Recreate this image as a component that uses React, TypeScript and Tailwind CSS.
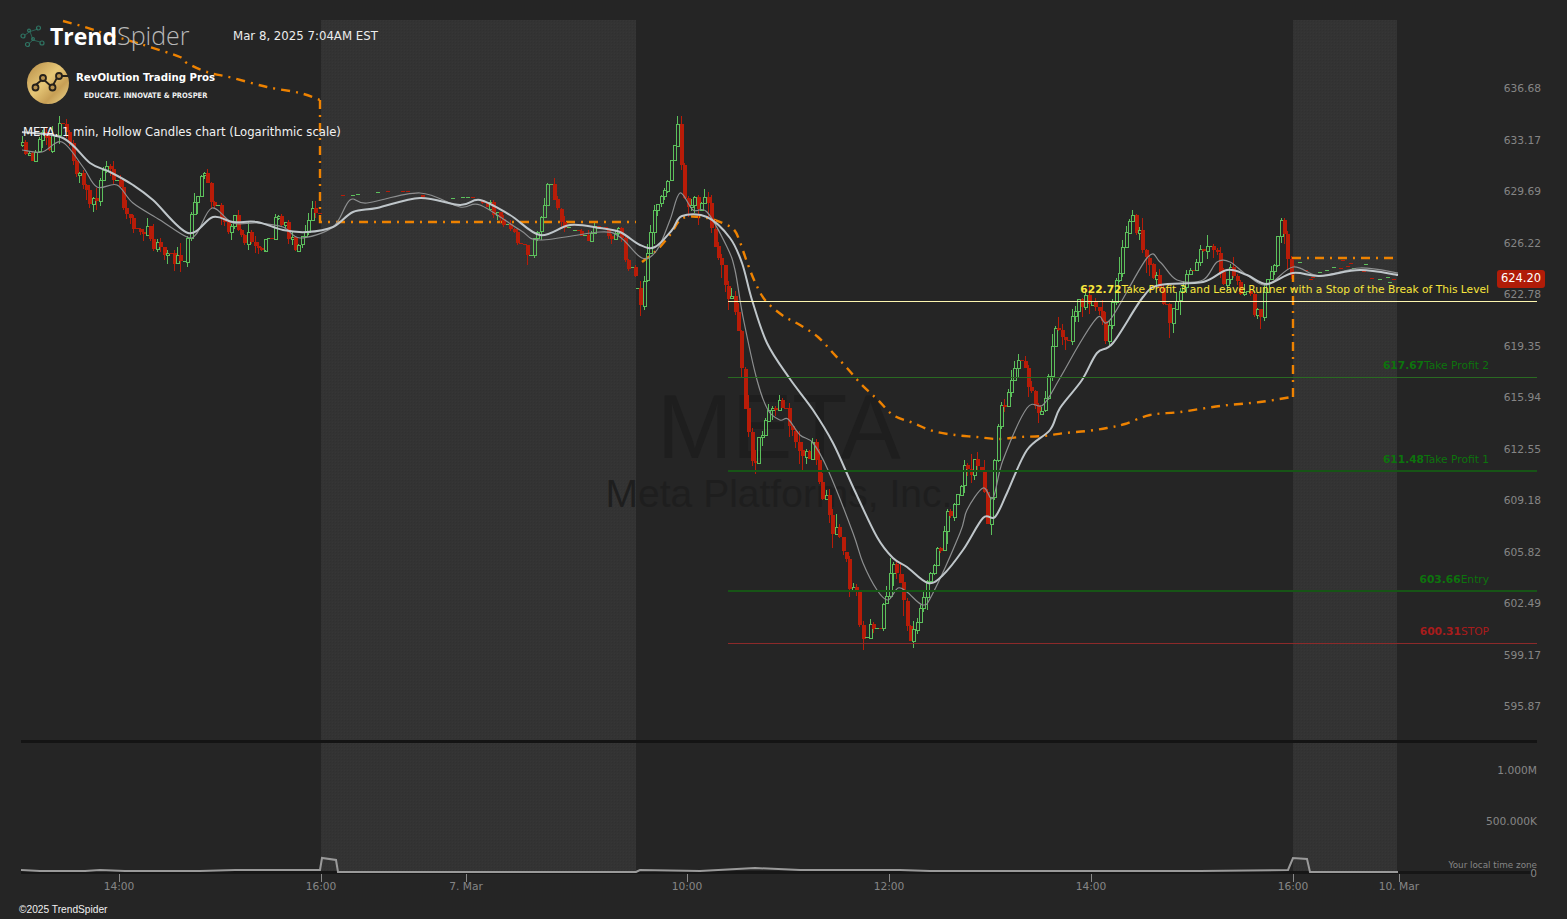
const W = 1567;
const H = 919;

type Pt = [number, number];

const PRICE_PATH: Pt[] = [
  [21, 145], [35, 150], [50, 142], [60, 135], [70, 165], [85, 200], [90, 222], [100, 188], [110, 176], [125, 208],
  [140, 222], [150, 238], [165, 262], [185, 268], [195, 190], [205, 170], [215, 212], [225, 236], [240, 225], [260, 242],
  [275, 222], [295, 255], [310, 225], [325, 215], [335, 195], [350, 195], [400, 190], [440, 200], [470, 195], [500, 215],
  [510, 240], [530, 262], [548, 182], [560, 222], [590, 225], [620, 240], [640, 298], [655, 205], [665, 180], [677, 128],
  [685, 195], [705, 205], [715, 250], [730, 290], [738, 350], [745, 410], [755, 465], [765, 420], [785, 415], [800, 455],
  [815, 450], [830, 510], [845, 565], [860, 625], [880, 628], [895, 565], [910, 628], [920, 615], [935, 550], [950, 510],
  [965, 455], [980, 470], [988, 540], [1000, 400], [1020, 370], [1040, 410], [1055, 340], [1075, 310], [1095, 300], [1105, 335],
  [1125, 228], [1140, 235], [1155, 265], [1170, 312], [1190, 265], [1210, 238], [1225, 270], [1245, 285], [1260, 325], [1280, 232],
  [1293, 265],
];

const MA_THICK: Pt[] = [
  [22, 132], [63, 138], [90, 163], [110, 172], [133, 185], [153, 200], [188, 233], [213, 217], [233, 222], [257, 222],
  [283, 230], [307, 232], [333, 227], [353, 212], [377, 208], [420, 198], [460, 205], [480, 200], [510, 215], [540, 235],
  [570, 225], [600, 228], [620, 232], [640, 245], [655, 247], [672, 230], [682, 216], [707, 217], [730, 238], [742, 263],
  [752, 300], [767, 343], [790, 379], [813, 410], [833, 443], [853, 487], [877, 537], [893, 558], [907, 567], [928, 583],
  [943, 575], [963, 550], [983, 518], [995, 517], [1007, 493], [1027, 450], [1050, 430], [1060, 408], [1082, 380], [1097, 353],
  [1113, 343], [1143, 297], [1160, 285], [1203, 282], [1227, 270], [1247, 275], [1267, 284], [1293, 273], [1320, 276], [1360, 270],
  [1398, 275],
];

const MA_THIN: Pt[] = [
  [22, 150], [42, 152], [62, 142], [83, 167], [97, 187], [117, 185], [133, 203], [160, 220], [187, 237], [197, 233],
  [212, 208], [233, 223], [257, 223], [283, 227], [300, 238], [333, 227], [350, 200], [367, 203], [420, 193], [460, 207],
  [480, 205], [520, 230], [540, 240], [600, 232], [620, 237], [642, 258], [657, 250], [670, 220], [680, 193], [693, 210],
  [707, 212], [727, 247], [735, 270], [743, 317], [757, 380], [768, 410], [780, 420], [788, 419], [800, 435], [813, 443],
  [828, 470], [853, 533], [863, 563], [877, 590], [888, 600], [898, 588], [907, 592], [923, 605], [933, 593], [960, 533],
  [967, 510], [983, 488], [993, 498], [1003, 460], [1027, 408], [1043, 405], [1060, 378], [1080, 343], [1098, 317], [1110, 320],
  [1147, 258], [1160, 262], [1177, 280], [1203, 280], [1217, 262], [1230, 262], [1247, 275], [1267, 285], [1293, 267], [1320, 276],
  [1360, 268], [1398, 273],
];

const VWAP_A: Pt[] = [
  [63, 21], [85, 27], [103, 33], [127, 40], [150, 47], [180, 57], [187, 63], [207, 72], [233, 78], [267, 87], [300, 93], [320, 100],
];
const VWAP_B: Pt[] = [
  [642, 262], [657, 250], [670, 235], [683, 218], [707, 218], [727, 225], [735, 231], [740, 242], [747, 262], [755, 282],
  [765, 300], [782, 315], [800, 325], [818, 337], [833, 353], [847, 368], [862, 385], [878, 400], [893, 415], [913, 423],
  [933, 431], [955, 435], [977, 437], [998, 439], [1020, 437], [1043, 436], [1065, 433], [1087, 431], [1107, 428], [1125, 424],
  [1150, 415], [1180, 412], [1220, 406], [1260, 402], [1292, 397],
];

const VOLUME: Pt[] = [
  [21, 870], [40, 871], [85, 871], [100, 870], [125, 871], [200, 871], [235, 870], [320, 870], [322, 858], [336, 860], [338, 872],
  [636, 872], [640, 870], [700, 871], [755, 868], [800, 870], [860, 870], [900, 870], [930, 871], [1000, 871], [1100, 871],
  [1200, 871], [1288, 870], [1293, 858], [1307, 859], [1310, 872], [1398, 872],
];

const PRICE_TICKS = [
  ["636.68", 89], ["633.17", 141], ["629.69", 192], ["626.22", 244], ["622.78", 295], ["619.35", 347], ["615.94", 398],
  ["612.55", 450], ["609.18", 501], ["605.82", 553], ["602.49", 604], ["599.17", 656], ["595.87", 707],
] as const;

const TIME_TICKS = [
  ["14:00", 119], ["16:00", 321], ["7. Mar", 466], ["10:00", 687], ["12:00", 889], ["14:00", 1091], ["16:00", 1293], ["10. Mar", 1399],
] as const;

const LEVELS = [
  { y: 301, h: 1, color: "#fdf6b0" },
  { y: 377, h: 1, color: "#2a6a22" },
  { y: 470, h: 2, color: "#175416" },
  { y: 590, h: 2, color: "#175416" },
  { y: 643, h: 1, color: "#8c2a2a" },
];

const LEVEL_LABELS = [
  { price: "622.72", name: "Take Profit 3 and Leave Runner with a Stop of the Break of This Level", y: 290, color: "#f8e63c" },
  { price: "617.67", name: "Take Profit 2", y: 366, color: "#0d730d" },
  { price: "611.48", name: "Take Profit 1", y: 460, color: "#0d730d" },
  { price: "603.66", name: "Entry", y: 580, color: "#0d730d" },
  { price: "600.31", name: "STOP", y: 632, color: "#a81c1c" },
];

function rng(seed: number) {
  let s = seed;
  return () => {
    s = (s * 16807) % 2147483647;
    return s / 2147483647;
  };
}

function at(points: Pt[], x: number) {
  for (let i = 1; i < points.length; i++) {
    if (x <= points[i][0]) {
      const [x0, y0] = points[i - 1];
      const [x1, y1] = points[i];
      return y0 + ((y1 - y0) * (x - x0)) / (x1 - x0);
    }
  }
  return points[points.length - 1][1];
}

function smooth(points: Pt[]) {
  let d = `M${points[0][0]} ${points[0][1]}`;
  for (let i = 0; i < points.length - 1; i++) {
    const p0 = points[Math.max(0, i - 1)];
    const p1 = points[i];
    const p2 = points[i + 1];
    const p3 = points[Math.min(points.length - 1, i + 2)];
    const c1x = p1[0] + (p2[0] - p0[0]) / 6;
    const c1y = p1[1] + (p2[1] - p0[1]) / 6;
    const c2x = p2[0] - (p3[0] - p1[0]) / 6;
    const c2y = p2[1] - (p3[1] - p1[1]) / 6;
    d += `C${c1x.toFixed(1)} ${c1y.toFixed(1)} ${c2x.toFixed(1)} ${c2y.toFixed(1)} ${p2[0]} ${p2[1]}`;
  }
  return d;
}

type Candle = { x: number; open: number; close: number; high: number; low: number };

function buildCandles() {
  const r = rng(48271);
  const out: Candle[] = [];
  const push = (from: number, to: number, step: number, noise: number, wick: number, skip: number) => {
    let prev = at(PRICE_PATH, from);
    let drift = 0;
    for (let x = from; x < to; x += step) {
      drift = drift * 0.55 + (r() - 0.5) * noise;
      const close = at(PRICE_PATH, x) + drift;
      if (r() < skip) {
        prev = close;
        continue;
      }
      out.push({
        x,
        open: prev,
        close,
        high: Math.min(prev, close) - r() * r() * wick,
        low: Math.max(prev, close) + r() * r() * wick,
      });
      prev = close;
    }
  };
  push(22, 321, 3.37, 24, 16, 0);
  push(322, 490, 5, 2, 0.5, 0.4);
  push(490, 636, 3.37, 20, 12, 0.04);
  push(637, 1293, 3.37, 26, 18, 0);
  return out;
}

const CANDLES = buildCandles();

const AFTER_HOURS = [
  [1298, 262, 1], [1304, 270, -1], [1311, 277, -1], [1318, 272, 1], [1325, 270, 1], [1332, 267, 1], [1339, 268, -1], [1346, 266, -1],
  [1352, 268, 1], [1358, 270, -1], [1364, 264, 1], [1370, 278, -1], [1378, 279, 1], [1386, 277, 1], [1392, 279, -1], [1309, 279, -1],
  [1341, 260, -1], [1349, 263, -1], [1362, 271, -1], [1388, 282, 1],
];

// session bands sit under the watermark, the "M" of the company name falls on one
function SessionBands() {
  return (
    <svg className="absolute inset-0" width={W} height={H} viewBox={`0 0 ${W} ${H}`}>
      <defs>
        <pattern id="dither" width="3" height="3" patternUnits="userSpaceOnUse">
          <rect width="3" height="3" fill="#333333" />
          <rect width="1" height="1" fill="#303030" />
          <rect x="2" y="2" width="1" height="1" fill="#363636" />
        </pattern>
      </defs>
      <rect x="321" y="20" width="315" height="852" fill="url(#dither)" />
      <rect x="1293" y="20" width="104" height="852" fill="url(#dither)" />
    </svg>
  );
}

function ChartLayer() {
  return (
    <svg className="absolute inset-0" width={W} height={H} viewBox={`0 0 ${W} ${H}`}>
      <rect x="21" y="740" width="1516" height="3" fill="#141414" />
      <rect x="21" y="871" width="1516" height="3" fill="#161616" />

      <path d={smooth(VWAP_A)} fill="none" stroke="#ee8200" strokeWidth="2.4" strokeDasharray="9 6 2 6" />
      <path d="M320 100V222H636" fill="none" stroke="#ee8200" strokeWidth="2.4" strokeDasharray="9 6 2 6" />
      <path d={smooth(VWAP_B)} fill="none" stroke="#ee8200" strokeWidth="2.4" strokeDasharray="9 6 2 6" />
      <path d="M1293 397V258H1397" fill="none" stroke="#ee8200" strokeWidth="2.4" strokeDasharray="9 6 2 6" />

      {CANDLES.map((c) => {
        const up = c.close < c.open;
        const top = Math.round(Math.min(c.open, c.close));
        const h = Math.round(Math.max(1, Math.abs(c.close - c.open)));
        const hi = Math.round(c.high);
        const lo = Math.round(c.low);
        const x = Math.round(c.x);
        if (h < 2) {
          return <rect key={c.x} x={x - 1} y={top} width="4" height="1" fill={up ? "#5cc05c" : "#b81c08"} />;
        }
        return up ? (
          <g key={c.x} stroke="#5cc05c" fill="none">
            <path d={`M${x + 0.5} ${hi}V${top}M${x + 0.5} ${top + h}V${lo}`} />
            <rect x={x - 0.5} y={top + 0.5} width="3" height={h} strokeWidth="1" />
          </g>
        ) : (
          <g key={c.x}>
            <path d={`M${x + 0.5} ${hi}V${lo}`} stroke="#b81c08" />
            <rect x={x - 1} y={top} width="4" height={h} fill="#b81c08" />
          </g>
        );
      })}
      {AFTER_HOURS.map(([x, y, dir]) => (
        <rect key={`${x}-${y}`} x={x} y={y} width="4" height="1" fill={dir > 0 ? "#5cc05c" : "#b81c08"} />
      ))}

      <path d={smooth(MA_THIN)} fill="none" stroke="#8d8f90" strokeWidth="1.2" />
      <path d={smooth(MA_THICK)} fill="none" stroke="#bfc6ca" strokeWidth="2" />

      {LEVELS.map((l) => (
        <rect key={l.y} x="728" y={l.y} width="809" height={l.h} fill={l.color} />
      ))}

      <path d={`M${VOLUME.map((p) => p.join(" ")).join("L")}`} fill="none" stroke="#9a9a9a" strokeWidth="2" />
      {TIME_TICKS.map(([label, x]) => (
        <rect key={`${label}-${x}`} x={x} y="874" width="1" height="8" fill="#8a8a8a" />
      ))}
    </svg>
  );
}

function SpiderMark() {
  return (
    <svg width="26" height="24" viewBox="0 0 26 24" fill="none" stroke="#2f7463" strokeWidth="1.2">
      <path d="M6 11L11 7.5M11 7.5L14 16M14 16L10 19.5M14 16L21 18M11 7.5L19 5" strokeWidth="0.8" />
      <circle cx="4" cy="12" r="2" />
      <circle cx="10" cy="6.5" r="1.4" />
      <circle cx="19.5" cy="4" r="2" />
      <circle cx="14" cy="15" r="1.4" />
      <circle cx="8.5" cy="20.5" r="2" />
      <circle cx="23" cy="19" r="2" />
    </svg>
  );
}

function GoldBadge() {
  return (
    <svg width="42" height="42" viewBox="0 0 42 42">
      <defs>
        <linearGradient id="gold" x1="0" y1="0" x2="1" y2="1">
          <stop offset="0" stopColor="#b58a45" />
          <stop offset="0.45" stopColor="#e6c777" />
          <stop offset="0.7" stopColor="#c79f55" />
          <stop offset="1" stopColor="#efd98f" />
        </linearGradient>
      </defs>
      <circle cx="21" cy="21" r="21" fill="url(#gold)" />
      <path d="M6 25L16 17L25 25L31 14H41" fill="none" stroke="#26211a" strokeWidth="1.8" />
      <g fill="#b8924e" stroke="#26211a" strokeWidth="1.8">
        <circle cx="16" cy="16" r="3" />
        <circle cx="25.5" cy="25.5" r="3" />
        <circle cx="32" cy="14" r="3" />
        <circle cx="8.5" cy="25.5" r="3" />
      </g>
    </svg>
  );
}

function App() {
  return (
    <div className="relative h-[919px] w-full overflow-hidden bg-[#252525] font-['DejaVu_Sans',sans-serif]">
      <SessionBands />

      <div className="absolute left-[604px] top-[380px] flex w-[350px] flex-col items-center text-[#1e1e1e]">
        <span className="font-['Liberation_Sans',sans-serif] text-[90px] leading-[94px]">META</span>
        <span className="font-['Liberation_Sans',sans-serif] text-[39px] leading-[40px] whitespace-nowrap">Meta Platforms, Inc.</span>
      </div>

      <ChartLayer />

      <div className="absolute left-0 top-0 flex flex-col pl-[19px] pt-[23px]">
        <div className="flex items-center">
          <SpiderMark />
          <div className="ml-[5px] flex w-[183px] items-baseline font-['Open_Sans',sans-serif] leading-[24px] text-white">
            <span className="text-[23px] font-bold">Trend</span>
            <span className="text-[25px] font-light text-[#b8b8b8]">Spider</span>
          </div>
          <span className="text-[11.75px] leading-[22px] text-[#ececec]">Mar 8, 2025 7:04AM EST</span>
        </div>
        <div className="ml-[8px] mt-[14px] flex items-center gap-[7px]">
          <GoldBadge />
          <div className="mt-[5px] flex flex-col">
            <span className="text-[10.2px] font-bold leading-[14px] text-white">RevOlution Trading Pros</span>
            <span className="ml-[8px] mt-[6px] font-['DejaVu_Sans_Condensed','DejaVu_Sans',sans-serif] text-[7.5px] font-bold leading-[10px] text-[#f0f0f0]">
              EDUCATE. INNOVATE &amp; PROSPER
            </span>
          </div>
        </div>
        <span className="ml-[4px] mt-[20px] text-[11.65px] leading-[16px] text-[#f2f2f2]">
          META, 1 min, Hollow Candles chart (Logarithmic scale)
        </span>
      </div>

      {LEVEL_LABELS.map((l) => (
        <div
          key={l.price}
          className="absolute right-[78px] flex -translate-y-1/2 text-[10.67px] leading-[14px] whitespace-nowrap"
          style={{ top: l.y, color: l.color }}
        >
          <span className="font-bold">{l.price}</span>
          <span>{l.name}</span>
        </div>
      ))}

      {PRICE_TICKS.map(([label, y]) => (
        <span
          key={label}
          className="absolute right-[26px] -translate-y-1/2 text-[10.67px] leading-[14px] text-[#858585]"
          style={{ top: y }}
        >
          {label}
        </span>
      ))}

      <span className="absolute left-[1497px] top-[270px] flex h-[18px] w-[48px] items-center justify-center rounded-[3px] bg-[#b01c08] text-[11.5px] text-white">
        624.20
      </span>

      <span className="absolute right-[30px] top-[764px] text-[10.67px] leading-[14px] text-[#858585]">1.000M</span>
      <span className="absolute right-[30px] top-[815px] text-[10.67px] leading-[14px] text-[#858585]">500.000K</span>
      <span className="absolute right-[30px] top-[860px] text-[8.8px] leading-[10px] text-[#858585]">Your local time zone</span>
      <span className="absolute right-[30px] top-[870px] text-[10.67px] leading-[8px] text-[#858585]">0</span>

      {TIME_TICKS.map(([label, x]) => (
        <span
          key={`${label}-${x}`}
          className="absolute top-[880px] -translate-x-1/2 text-[10.67px] leading-[14px] text-[#858585]"
          style={{ left: x }}
        >
          {label}
        </span>
      ))}

      <span className="absolute left-[19px] top-[904px] font-['Liberation_Sans',sans-serif] text-[10.2px] leading-[12px] text-[#f0f0f0]">
        ©2025 TrendSpider
      </span>
    </div>
  );
}

export default App;
